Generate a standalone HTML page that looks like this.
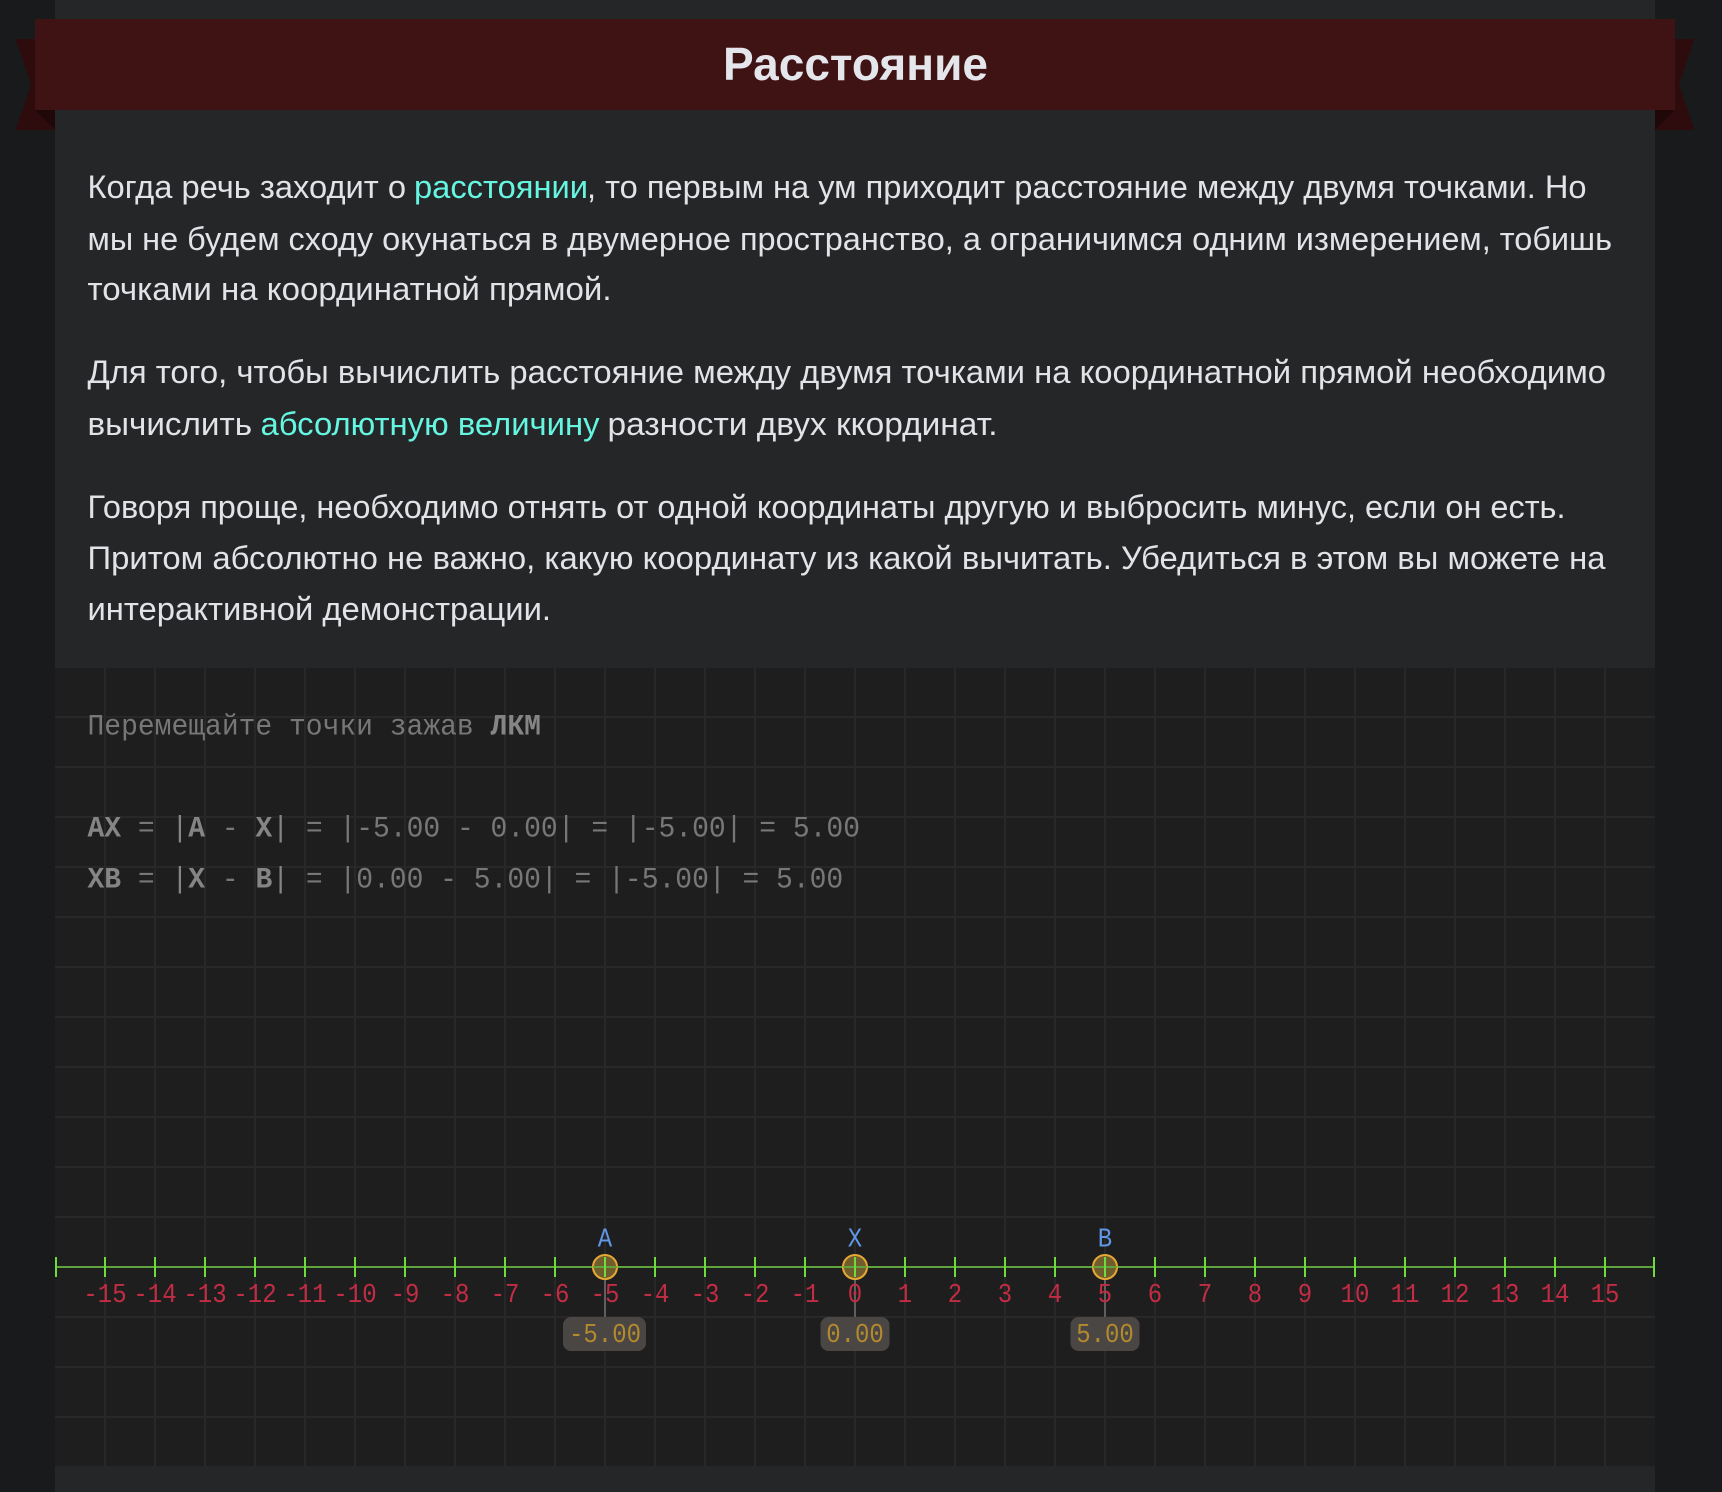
<!DOCTYPE html>
<html lang="ru">
<head>
<meta charset="utf-8">
<title>Расстояние</title>
<style>
html,body{margin:0;padding:0;width:1722px;height:1492px;overflow:hidden;background:#181a1b}
svg{display:block}
.t{font-family:"Liberation Sans",sans-serif;font-size:32px;fill:#e1e3e7}
.l{font-family:"Liberation Sans",sans-serif;font-size:32px;fill:#66f5e0}
.m{font-family:"Liberation Mono",monospace;font-size:30px;fill:#777}
.m tspan{font-weight:bold;fill:#858585}
.m tspan.b{font-weight:normal;fill:#858585}
.n{font-family:"Liberation Mono",monospace;font-size:27px;fill:#c22c44;text-anchor:middle}
.p{font-family:"Liberation Mono",monospace;font-size:27px;fill:#5f96e6;text-anchor:middle}
.v{font-family:"Liberation Mono",monospace;font-size:27px;fill:#b38a2d;text-anchor:middle}
</style>
</head>
<body>
<svg xmlns="http://www.w3.org/2000/svg" width="1722" height="1492" viewBox="0 0 1722 1492">
<rect width="1722" height="1492" fill="#181a1b"/>
<rect x="55" y="0" width="1600" height="1492" fill="#242628"/>

<polygon points="15.5,39 55,39 55,130 15.5,130 31,84.5" fill="#2e0c0e"/>
<polygon points="1694.5,39 1655,39 1655,130 1694.5,130 1679,84.5" fill="#2e0c0e"/>
<polygon points="35,110 55,110 55,130" fill="#210808"/>
<polygon points="1675,110 1655,110 1655,130" fill="#210808"/>
<rect x="35" y="19" width="1640" height="91" fill="#3f1214"/>
<text x="723" y="80" font-family="'Liberation Sans',sans-serif" font-size="46" font-weight="bold" fill="#e4e6eb" textLength="265" lengthAdjust="spacingAndGlyphs">Расстояние</text>

<text class="t" x="87.5" y="198" textLength="318.5" lengthAdjust="spacingAndGlyphs">Когда речь заходит о</text>
<text class="l" x="414" y="198" textLength="174" lengthAdjust="spacingAndGlyphs">расстоянии</text>
<text class="t" x="587" y="198" textLength="999.5" lengthAdjust="spacingAndGlyphs">, то первым на ум приходит расстояние между двумя точками. Но</text>
<text class="t" x="87.5" y="250" textLength="1524.5" lengthAdjust="spacingAndGlyphs">мы не будем сходу окунаться в двумерное пространство, а ограничимся одним измерением, тобишь</text>
<text class="t" x="87.5" y="300" textLength="524" lengthAdjust="spacingAndGlyphs">точками на координатной прямой.</text>

<text class="t" x="87.5" y="383" textLength="1518.5" lengthAdjust="spacingAndGlyphs">Для того, чтобы вычислить расстояние между двумя точками на координатной прямой необходимо</text>
<text class="t" x="87.5" y="435" textLength="164.5" lengthAdjust="spacingAndGlyphs">вычислить</text>
<text class="l" x="260.5" y="435" textLength="339" lengthAdjust="spacingAndGlyphs">абсолютную величину</text>
<text class="t" x="607.5" y="435" textLength="390" lengthAdjust="spacingAndGlyphs">разности двух ккординат.</text>

<text class="t" x="87.5" y="518" textLength="1478" lengthAdjust="spacingAndGlyphs">Говоря проще, необходимо отнять от одной координаты другую и выбросить минус, если он есть.</text>
<text class="t" x="87.5" y="569" textLength="1518" lengthAdjust="spacingAndGlyphs">Притом абсолютно не важно, какую координату из какой вычитать. Убедиться в этом вы можете на</text>
<text class="t" x="87.5" y="620" textLength="463.5" lengthAdjust="spacingAndGlyphs">интерактивной демонстрации.</text>

<rect x="55" y="668" width="1600" height="798" fill="#1e1e1e"/>
<path fill="none" stroke="#282828" stroke-width="2" d="M55 717H1655M55 767H1655M55 817H1655M55 867H1655M55 917H1655M55 967H1655M55 1017H1655M55 1067H1655M55 1117H1655M55 1167H1655M55 1217H1655M55 1317H1655M55 1367H1655M55 1417H1655M105 668V1466M155 668V1466M205 668V1466M255 668V1466M305 668V1466M355 668V1466M405 668V1466M455 668V1466M505 668V1466M555 668V1466M605 668V1466M655 668V1466M705 668V1466M755 668V1466M805 668V1466M855 668V1466M905 668V1466M955 668V1466M1005 668V1466M1055 668V1466M1105 668V1466M1155 668V1466M1205 668V1466M1255 668V1466M1305 668V1466M1355 668V1466M1405 668V1466M1455 668V1466M1505 668V1466M1555 668V1466M1605 668V1466"/>

<text class="m" transform="translate(87.5 734.5) scale(.9333 1)">Перемещайте точки зажав <tspan>ЛКМ</tspan></text>
<text class="m" transform="translate(87.5 836.5) scale(.9333 1)"><tspan>AX</tspan> = <tspan class="b">|</tspan><tspan>A</tspan> - <tspan>X</tspan><tspan class="b">|</tspan> = |-5.00 - 0.00| = |-5.00| = 5.00</text>
<text class="m" transform="translate(87.5 887.5) scale(.9333 1)"><tspan>XB</tspan> = <tspan class="b">|</tspan><tspan>X</tspan> - <tspan>B</tspan><tspan class="b">|</tspan> = |0.00 - 5.00| = |-5.00| = 5.00</text>

<path fill="none" stroke="#5f5f5f" stroke-width="2" d="M605 1267V1318M855 1267V1318M1105 1267V1318"/>
<path fill="none" stroke="#5fa33c" stroke-width="2" d="M55 1267H1655"/>

<g>
<text class="n" transform="translate(105 1302) scale(.889 1)">-15</text>
<text class="n" transform="translate(155 1302) scale(.889 1)">-14</text>
<text class="n" transform="translate(205 1302) scale(.889 1)">-13</text>
<text class="n" transform="translate(255 1302) scale(.889 1)">-12</text>
<text class="n" transform="translate(305 1302) scale(.889 1)">-11</text>
<text class="n" transform="translate(355 1302) scale(.889 1)">-10</text>
<text class="n" transform="translate(405 1302) scale(.889 1)">-9</text>
<text class="n" transform="translate(455 1302) scale(.889 1)">-8</text>
<text class="n" transform="translate(505 1302) scale(.889 1)">-7</text>
<text class="n" transform="translate(555 1302) scale(.889 1)">-6</text>
<text class="n" transform="translate(605 1302) scale(.889 1)">-5</text>
<text class="n" transform="translate(655 1302) scale(.889 1)">-4</text>
<text class="n" transform="translate(705 1302) scale(.889 1)">-3</text>
<text class="n" transform="translate(755 1302) scale(.889 1)">-2</text>
<text class="n" transform="translate(805 1302) scale(.889 1)">-1</text>
<text class="n" transform="translate(855 1302) scale(.889 1)">0</text>
<text class="n" transform="translate(905 1302) scale(.889 1)">1</text>
<text class="n" transform="translate(955 1302) scale(.889 1)">2</text>
<text class="n" transform="translate(1005 1302) scale(.889 1)">3</text>
<text class="n" transform="translate(1055 1302) scale(.889 1)">4</text>
<text class="n" transform="translate(1105 1302) scale(.889 1)">5</text>
<text class="n" transform="translate(1155 1302) scale(.889 1)">6</text>
<text class="n" transform="translate(1205 1302) scale(.889 1)">7</text>
<text class="n" transform="translate(1255 1302) scale(.889 1)">8</text>
<text class="n" transform="translate(1305 1302) scale(.889 1)">9</text>
<text class="n" transform="translate(1355 1302) scale(.889 1)">10</text>
<text class="n" transform="translate(1405 1302) scale(.889 1)">11</text>
<text class="n" transform="translate(1455 1302) scale(.889 1)">12</text>
<text class="n" transform="translate(1505 1302) scale(.889 1)">13</text>
<text class="n" transform="translate(1555 1302) scale(.889 1)">14</text>
<text class="n" transform="translate(1605 1302) scale(.889 1)">15</text>
</g>

<g fill="#705c2c" stroke="#e5a835" stroke-width="2">
<circle cx="605" cy="1267" r="12"/>
<circle cx="855" cy="1267" r="12"/>
<circle cx="1105" cy="1267" r="12"/>
</g>
<path fill="none" stroke="#5fa33c" stroke-width="2" d="M593 1267H617M843 1267H867M1093 1267H1117"/>
<path fill="none" stroke="#6fdc3e" stroke-width="2" d="M56 1257V1277M105 1257V1277M155 1257V1277M205 1257V1277M255 1257V1277M305 1257V1277M355 1257V1277M405 1257V1277M455 1257V1277M505 1257V1277M555 1257V1277M605 1257V1277M655 1257V1277M705 1257V1277M755 1257V1277M805 1257V1277M855 1257V1277M905 1257V1277M955 1257V1277M1005 1257V1277M1055 1257V1277M1105 1257V1277M1155 1257V1277M1205 1257V1277M1255 1257V1277M1305 1257V1277M1355 1257V1277M1405 1257V1277M1455 1257V1277M1505 1257V1277M1555 1257V1277M1605 1257V1277M1654 1257V1277"/>

<text class="p" transform="translate(605 1246.5) scale(.889 1)">A</text>
<text class="p" transform="translate(855 1246.5) scale(.889 1)">X</text>
<text class="p" transform="translate(1105 1246.5) scale(.889 1)">B</text>

<rect x="563" y="1317" width="83" height="34" rx="8" fill="#4a4644"/>
<rect x="820.5" y="1317" width="69" height="34" rx="8" fill="#4a4644"/>
<rect x="1070.5" y="1317" width="69" height="34" rx="8" fill="#4a4644"/>
<text class="v" transform="translate(605 1342) scale(.889 1)">-5.00</text>
<text class="v" transform="translate(855 1342) scale(.889 1)">0.00</text>
<text class="v" transform="translate(1105 1342) scale(.889 1)">5.00</text>
</svg>
</body>
</html>
